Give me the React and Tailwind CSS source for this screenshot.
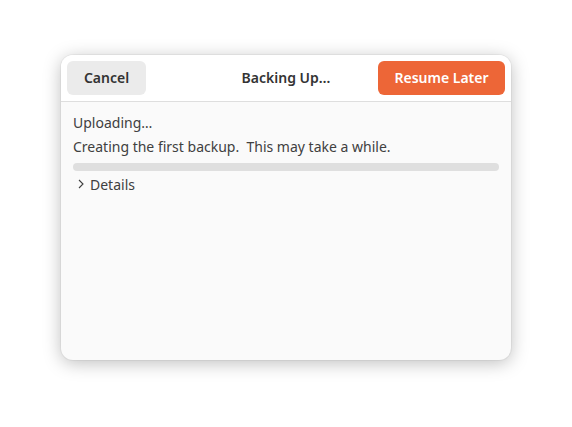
export default function App() {
  return (
    <div
      className="w-[572px] h-[427px] bg-white pt-[55px] pl-[61px]"
      style={{ fontFamily: '"Noto Sans", "Open Sans", sans-serif' }}
    >
      <div className="w-[450px] h-[305px] rounded-[12px] bg-[#fafafa] overflow-hidden shadow-[0_3px_18px_rgba(0,0,0,0.26),0_0_0_1px_rgba(0,0,0,0.04)] flex flex-col">
        <div className="h-[47px] bg-white border-b border-[#dedede] grid grid-cols-[1fr_auto_1fr] items-center px-[6px] pb-px">
          <div className="flex">
            <button className="w-[79px] h-[34px] rounded-[6px] bg-[#ebebeb] text-[14px] font-semibold text-[#333333]">
              Cancel
            </button>
          </div>
          <div className="text-[14px] font-semibold text-[#333333]">Backing Up…</div>
          <div className="flex justify-end">
            <button className="w-[127px] h-[34px] rounded-[6px] bg-[#ed6637] text-[14px] font-semibold text-white">
              Resume Later
            </button>
          </div>
        </div>
        <div className="px-[12px] pt-[11px] flex flex-col text-[14px] text-[#404040]">
          <div className="h-[20px] leading-[20px]">Uploading…</div>
          <div className="h-[20px] leading-[20px] mt-[4px]">Creating the first backup.&nbsp; This may take a while.</div>
          <div className="h-[8px] rounded-full bg-[#dfdfdf] mt-[6px]" />
          <div className="flex items-center h-[20px] mt-[3px] pl-[4px] gap-[5px]">
            <svg width="8" height="10" viewBox="0 0 8 10" fill="none">
              <path d="M2 1l4 4-4 4" stroke="#404040" strokeWidth="1.1" />
            </svg>
            <span>Details</span>
          </div>
        </div>
      </div>
    </div>
  )
}
